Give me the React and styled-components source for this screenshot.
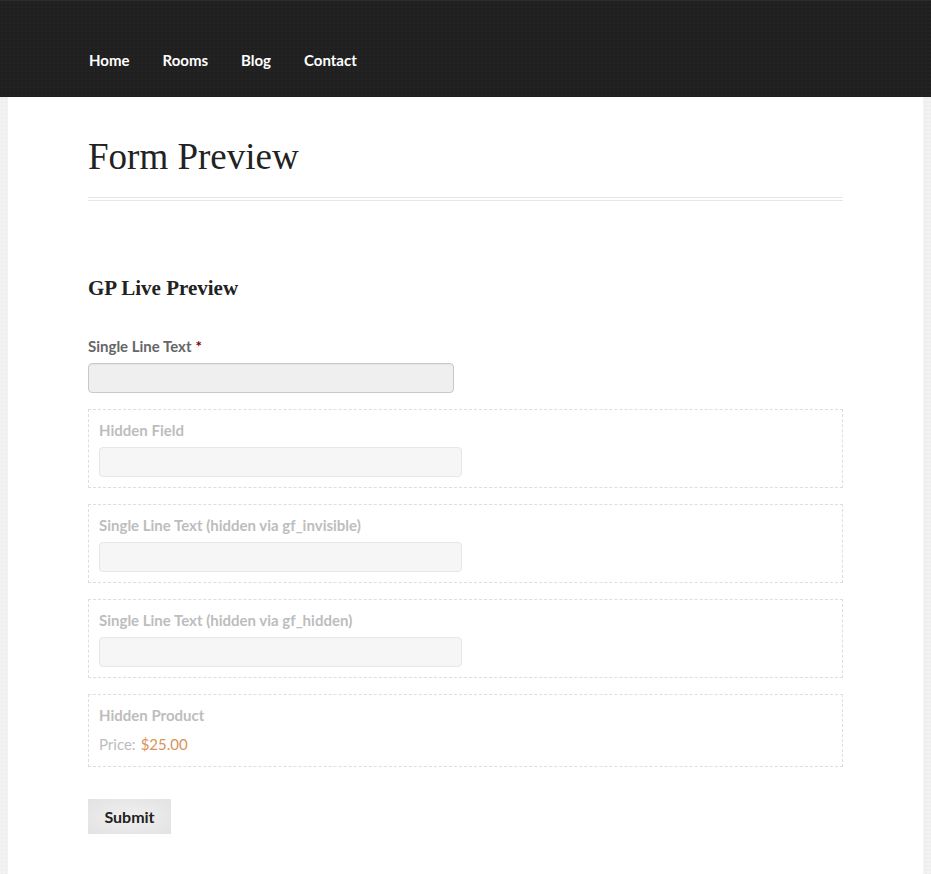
import styled, { createGlobalStyle } from 'styled-components';

const GlobalStyle = createGlobalStyle`
  html, body {
    margin: 0;
    padding: 0;
  }
  body {
    background-color: #f2f2f2;
    background-image: radial-gradient(rgba(0, 0, 0, 0.02) 1px, transparent 1px);
    background-size: 4px 4px;
    font-family: Lato, 'Open Sans', sans-serif;
    color: #222;
  }
`;

const Header = styled.header`
  height: 97px;
  background-color: #202020;
  background-image: radial-gradient(rgba(255, 255, 255, 0.02) 1px, transparent 1px);
  background-size: 4px 4px;
  border-top: 1px solid #2c2c2c;
  box-sizing: border-box;
  display: flex;
  align-items: center;
  padding: 0 89px;
`;

const Nav = styled.nav`
  display: flex;
  gap: 33px;
  margin-top: 22px;
`;

const NavLink = styled.a`
  color: #fff;
  font-size: 15px;
  font-weight: 700;
  text-decoration: none;
  line-height: 20px;
`;

const Page = styled.main`
  margin: 0 8px;
  background: #fff;
  padding: 36px 80px 40px 80px;
  min-height: 740px;
  box-sizing: border-box;
`;

const Title = styled.h1`
  margin: 0;
  font-family: 'Liberation Serif', 'DejaVu Serif', serif;
  font-weight: 400;
  font-size: 37px;
  line-height: 48px;
  color: #222;
  padding-bottom: 16px;
  border-bottom: 4px double #e6e6e6;
`;

const FormTitle = styled.h3`
  margin: 73px 0 0 0;
  font-family: 'Liberation Serif', 'DejaVu Serif', serif;
  font-weight: 700;
  font-size: 21px;
  line-height: 28px;
  color: #222;
`;

const Fields = styled.div`
  display: flex;
  flex-direction: column;
  gap: 16px;
  margin-top: 34px;
`;

const Field = styled.div`
  display: flex;
  flex-direction: column;
  gap: 7px;
  ${p =>
    p.$ghost &&
    `
    border: 1px dashed #dedede;
    padding: 10px;
  `}
`;

const Label = styled.label`
  font-size: 15px;
  font-weight: 700;
  line-height: 20px;
  color: ${p => (p.$ghost ? '#bdbdbd' : '#666')};
`;

const Required = styled.span`
  color: #790000;
  margin-left: 4px;
`;

const Input = styled.input`
  box-sizing: border-box;
  height: 30px;
  width: ${p => (p.$ghost ? '363px' : '366px')};
  border-radius: 4px;
  border: 1px solid ${p => (p.$ghost ? '#e6e6e6' : '#c9c9c9')};
  background: ${p => (p.$ghost ? '#f6f6f6' : '#efefef')};
  box-shadow: ${p => (p.$ghost ? 'none' : 'inset 0 1px 1px rgba(0,0,0,0.04)')};
  outline: none;
`;

const PriceRow = styled.div`
  display: flex;
  gap: 5px;
  margin-top: 2px;
  font-size: 15px;
  line-height: 20px;
  padding-bottom: 2px;
`;

const PriceLabel = styled.span`
  color: #bdbdbd;
`;

const PriceValue = styled.span`
  color: #d9925c;
`;

const Submit = styled.button`
  margin-top: 32px;
  width: 83px;
  height: 35px;
  border: none;
  background: radial-gradient(ellipse at center, #f0f0f0 0%, #e2e2e2 100%);
  font-family: Lato, sans-serif;
  font-weight: 700;
  font-size: 16px;
  color: #222;
  cursor: pointer;
`;

const ghostFields = [
  'Hidden Field',
  'Single Line Text (hidden via gf_invisible)',
  'Single Line Text (hidden via gf_hidden)',
];

function App() {
  return (
    <>
      <GlobalStyle />
      <Header>
        <Nav>
          <NavLink href="#">Home</NavLink>
          <NavLink href="#">Rooms</NavLink>
          <NavLink href="#">Blog</NavLink>
          <NavLink href="#">Contact</NavLink>
        </Nav>
      </Header>
      <Page>
        <Title>Form Preview</Title>
        <FormTitle>GP Live Preview</FormTitle>
        <Fields>
          <Field>
            <Label>
              Single Line Text<Required>*</Required>
            </Label>
            <Input type="text" />
          </Field>
          {ghostFields.map(label => (
            <Field $ghost key={label}>
              <Label $ghost>{label}</Label>
              <Input $ghost type="text" />
            </Field>
          ))}
          <Field $ghost>
            <Label $ghost>Hidden Product</Label>
            <PriceRow>
              <PriceLabel>Price:</PriceLabel>
              <PriceValue>$25.00</PriceValue>
            </PriceRow>
          </Field>
        </Fields>
        <Submit type="button">Submit</Submit>
      </Page>
    </>
  );
}

export default App;
